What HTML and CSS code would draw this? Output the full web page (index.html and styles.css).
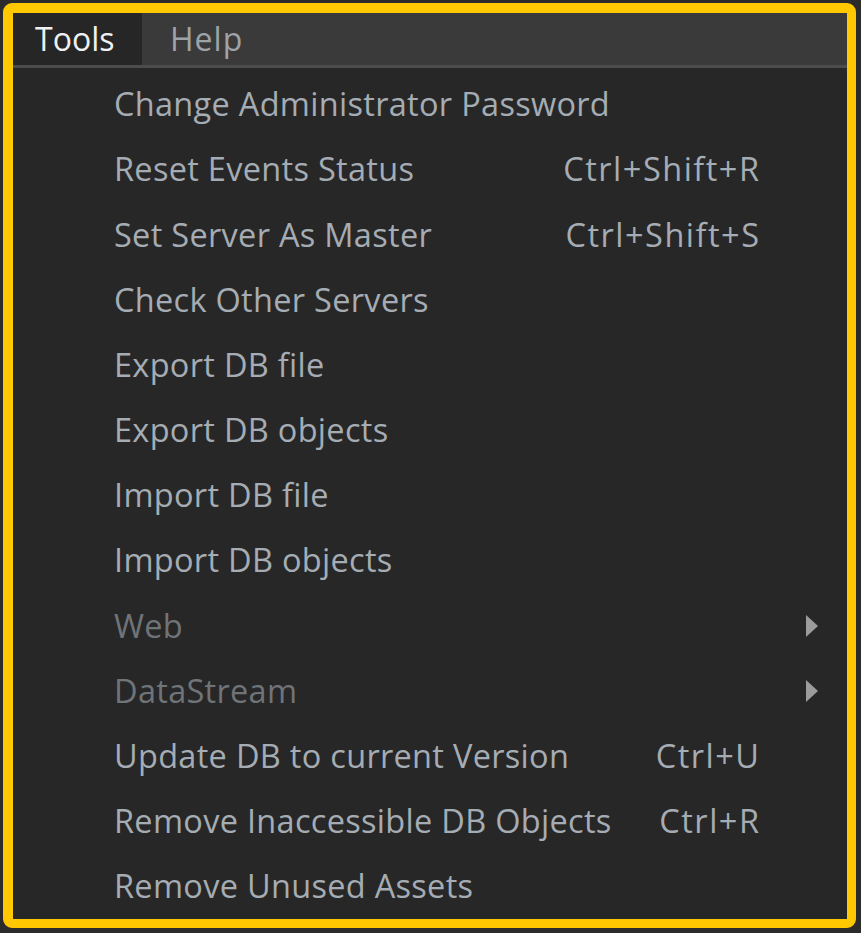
FILE: index.html
```html
<!DOCTYPE html>
<html>
<head>
<meta charset="utf-8">
<link rel="stylesheet" href="styles.css">
</head>
<body>
<div class="frame">
  <div class="menubar">
    <div class="top active">Tools</div>
    <div class="top">Help</div>
  </div>
  <div class="sep"></div>
  <ul class="menu">
    <li class="item"><span class="label">Change Administrator Password</span></li>
    <li class="item"><span class="label">Reset Events Status</span><span class="key">Ctrl+Shift+R</span></li>
    <li class="item"><span class="label">Set Server As Master</span><span class="key">Ctrl+Shift+S</span></li>
    <li class="item"><span class="label">Check Other Servers</span></li>
    <li class="item"><span class="label">Export DB file</span></li>
    <li class="item"><span class="label">Export DB objects</span></li>
    <li class="item"><span class="label">Import DB file</span></li>
    <li class="item"><span class="label">Import DB objects</span></li>
    <li class="item disabled"><span class="label">Web</span><span class="arrow"></span></li>
    <li class="item disabled"><span class="label">DataStream</span><span class="arrow"></span></li>
    <li class="item"><span class="label">Update DB to current Version</span><span class="key">Ctrl+U</span></li>
    <li class="item"><span class="label">Remove Inaccessible DB Objects</span><span class="key">Ctrl+R</span></li>
    <li class="item"><span class="label">Remove Unused Assets</span></li>
  </ul>
</div>
</body>
</html>
```

FILE: styles.css
```css
html, body {
  margin: 0;
  padding: 0;
  background: #2b2b2b;
}
body {
  padding: 3px;
  font-family: "Open Sans", "Noto Sans", sans-serif;
}
.frame {
  width: 834px;
  height: 906px;
  border: 10px solid #ffc800;
  border-right-width: 9px;
  border-bottom-width: 9px;
  border-radius: 9px;
  background: #272727;
  overflow: hidden;
  display: flex;
  flex-direction: column;
}
.menubar {
  height: 53px;
  background: #3a3a3a;
  display: flex;
}
.top {
  font-size: 32px;
  color: #9ea3a8;
  padding: 0 28px;
  display: flex;
  align-items: center;
  line-height: 1;
  padding-bottom: 1px;
}
.top.active {
  background: #262626;
  color: #eef0f2;
  width: 129px;
  box-sizing: border-box;
  padding-left: 22px;
  padding-right: 0;
}
.top + .top {
  letter-spacing: 1px;
}
.sep {
  height: 3px;
  background: #4c4c4c;
}
.menu {
  list-style: none;
  margin: 0;
  padding: 4px 0 0 0;
}
.item {
  height: 65.17px;
  display: flex;
  align-items: center;
  padding-left: 101px;
  padding-right: 88px;
  color: #a5acb3;
  font-size: 32.5px;
  line-height: 1;
  position: relative;
}
.item.disabled {
  color: #6f7479;
}
.label {
  flex: 1;
  white-space: nowrap;
  letter-spacing: 0.3px;
}
.key {
  white-space: nowrap;
  letter-spacing: 1.5px;
  margin-right: -1.5px;
}
.arrow {
  position: absolute;
  left: 793px;
  top: 22px;
  width: 0;
  height: 0;
  border-top: 11px solid transparent;
  border-bottom: 11px solid transparent;
  border-left: 12px solid #9c9c9c;
}
```
